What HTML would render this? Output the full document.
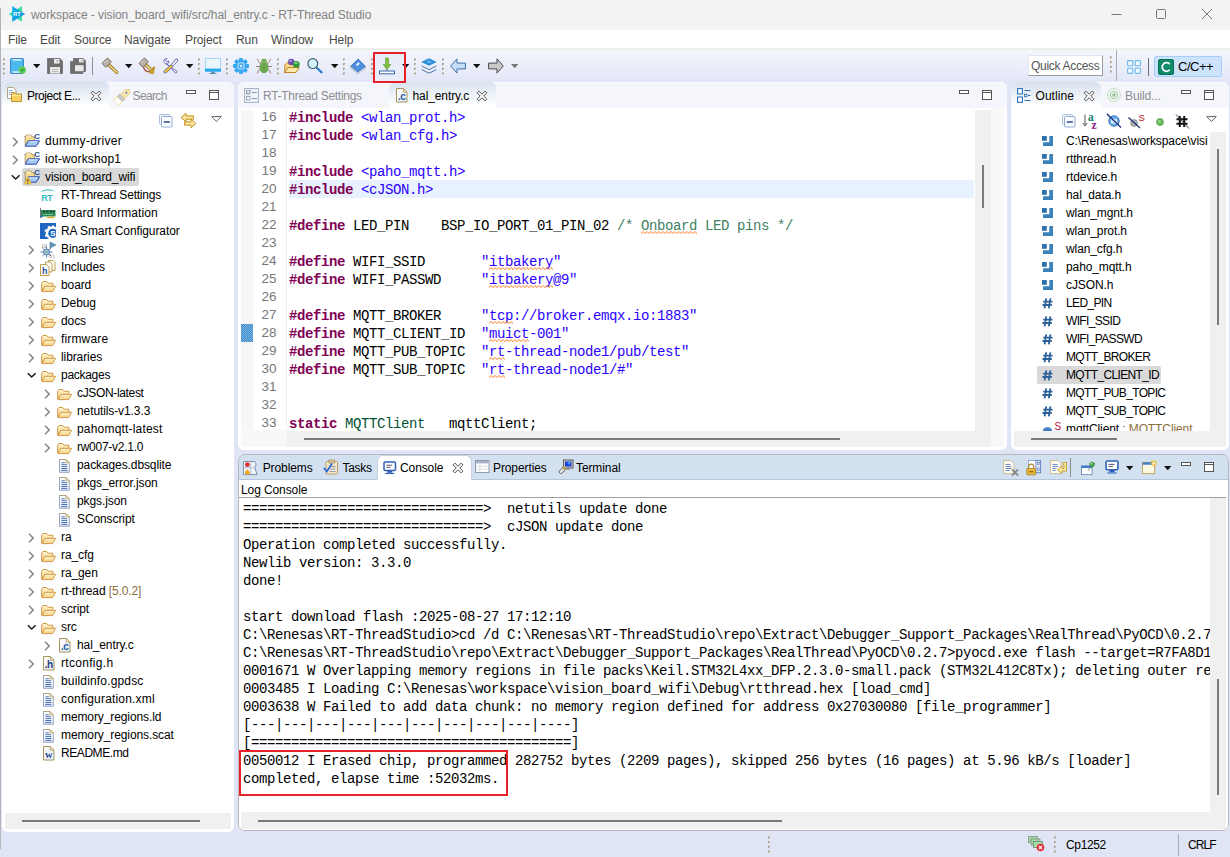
<!DOCTYPE html><html><head><meta charset="utf-8"><title>workspace - vision_board_wifi/src/hal_entry.c - RT-Thread Studio</title><style>
*{box-sizing:border-box;margin:0;padding:0}
html,body{width:1230px;height:857px;overflow:hidden}
body{background:#e0e5f5;font-family:"Liberation Sans",sans-serif;font-size:12px;color:#000;position:relative;letter-spacing:-0.1px}
.abs{position:absolute}
.t{position:absolute;white-space:nowrap;line-height:18px;height:18px}
.mono{font-family:"Liberation Mono",monospace;font-size:14px;letter-spacing:-0.4px;white-space:pre}
svg{position:absolute;overflow:visible}
.panel{position:absolute;background:#fff;border-radius:6px;overflow:hidden}
.hdr{position:absolute;left:0;top:0;right:0;height:26px;background:#f5f6fb;border-top:1px solid #fff}
.kw{color:#7f0055;font-weight:bold}
.str{color:#2a00ff}
.cm{color:#3f7f5f}
.ty{color:#005032}
.sq{position:relative;display:inline-block}
.sq svg{left:0;top:14px;width:100%;height:3px}
.ln{position:absolute;left:0;width:38.5px;text-align:right;color:#787878;font-size:13.5px;letter-spacing:0}
.cl{position:absolute;left:51px}
.g{color:#8c8c92}
</style></head><body>
<svg width="0" height="0" style="left:0;top:0"><defs><pattern id="zz" width="4" height="3" patternUnits="userSpaceOnUse"><path d="M-1 3.500 2 .5 5 3.500" fill="none" stroke="#ff7a22" stroke-width="1"/></pattern></defs></svg>
<div class="abs" style="left:0;top:0;width:1230px;height:30px;background:#f3f3f3"></div>
<svg style="left:8px;top:5px" width="18" height="18" viewBox="0 0 18 18"><defs><linearGradient id="rtb" x1="0" y1="0" x2="1" y2="1"><stop offset="0" stop-color="#16b4f0"/><stop offset="1" stop-color="#0a8ee0"/></linearGradient></defs><path d="M.8 8.900 14 1.100v15.600z" fill="#43e0a0"/><path d="M17.100 8.900 4.200 1.100v15.600z" fill="url(#rtb)"/><text x="9" y="11" font-size="5.600" font-weight="bold" fill="#fff" text-anchor="middle" font-family="Liberation Sans,sans-serif">RT</text></svg>
<div class="t" style="left:31px;top:6px;color:#828282;letter-spacing:-0.085px">workspace - vision_board_wifi/src/hal_entry.c - RT-Thread Studio</div>
<svg style="left:1100px;top:0" width="130" height="30"><path d="M11.500 14.500h10" stroke="#777" stroke-width="1"/><rect x="56.5" y="9.5" width="9" height="9" rx="1" fill="none" stroke="#777" stroke-width="1"/><path d="M102 9l10 10M112 9l-10 10" stroke="#777" stroke-width="1"/></svg>
<div class="abs" style="left:0;top:30px;width:1230px;height:18px;background:#fff"></div>
<div class="t" style="left:8px;top:31px;color:#484848">File</div>
<div class="t" style="left:40px;top:31px;color:#484848">Edit</div>
<div class="t" style="left:74px;top:31px;color:#484848">Source</div>
<div class="t" style="left:124px;top:31px;color:#484848">Navigate</div>
<div class="t" style="left:185px;top:31px;color:#484848">Project</div>
<div class="t" style="left:236px;top:31px;color:#484848">Run</div>
<div class="t" style="left:271px;top:31px;color:#484848">Window</div>
<div class="t" style="left:329px;top:31px;color:#484848">Help</div>
<div class="abs" style="left:0;top:48px;width:1230px;height:2px;background:#eeeeee"></div>
<div class="abs" style="left:0;top:50px;width:1230px;height:32px;background:linear-gradient(#f4f6fc,#eceffa 45%,#e2e6f6)"></div>
<svg style="left:3px;top:58px" width="3" height="17" viewBox="0 0 3 17"><rect x="0" y="0.5" width="2" height="2" fill="#a39880"/><rect x="1" y="1.5" width="1.2" height="1.2" fill="#fff" opacity=".6"/><rect x="0" y="5.2" width="2" height="2" fill="#a39880"/><rect x="1" y="6.2" width="1.2" height="1.2" fill="#fff" opacity=".6"/><rect x="0" y="9.9" width="2" height="2" fill="#a39880"/><rect x="1" y="10.9" width="1.2" height="1.2" fill="#fff" opacity=".6"/><rect x="0" y="14.6" width="2" height="2" fill="#a39880"/><rect x="1" y="15.6" width="1.2" height="1.2" fill="#fff" opacity=".6"/></svg>
<svg style="left:10px;top:58px" width="16" height="16" viewBox="0 0 16 16"><rect x=".5" y=".5" width="13" height="15" rx=".8" fill="#4cb9ee" stroke="#3a86c8"/><rect x="2.600" y="1" width="8.800" height="1.700" fill="#c9ebfb"/><rect x="2.600" y="13.200" width="7" height="1.800" fill="#c9ebfb"/><circle cx="12.300" cy="11.900" r="3.700" fill="#68d05c"/><path d="M12.300 9.500v4.800M9.900 11.900h4.800" stroke="#2f9e3a" stroke-width="1"/></svg>
<svg style="left:33px;top:64px" width="8" height="5" viewBox="0 0 8 5"><path d="M0 0h7.4L3.7 4.2z" fill="#111"/></svg>
<svg style="left:47px;top:58px" width="16" height="16" viewBox="0 0 16 16"><path d="M.5 .5h12.5l2.5 2.5v12.5H.5z" fill="#6f6f6f" stroke="#5a5a5a" stroke-width=".6"/><rect x="7" y="1" width="5.5" height="4.5" fill="#ececec"/><rect x="9.7" y="2.2" width="1.2" height="1.6" fill="#8a8a8a"/><rect x="3" y="9" width="10" height="6.5" fill="#e6e6e6"/><path d="M5 11.5h6M5 13.5h6" stroke="#bdbdbd" stroke-width="1"/></svg>
<svg style="left:70px;top:58px" width="16" height="16" viewBox="0 0 16 16"><path d="M.5 3.5h3v-3h9.8l2.2 2.2v10.8h-2.5v2H.5z" fill="#6f6f6f" stroke="#5a5a5a" stroke-width=".6"/><rect x="9" y="1" width="4.6" height="3.4" fill="#ececec"/><rect x="11.4" y="1.8" width="1" height="1.4" fill="#8a8a8a"/><rect x="5" y="7.2" width="8.6" height="6" fill="#e9e9e9"/></svg>
<div class="abs" style="left:92px;top:57px;width:1px;height:18px;background:#8d8d8d"></div>
<svg style="left:102px;top:58px" width="16" height="16" viewBox="0 0 16 16"><path d="M6.500 6.500 14.800 14.300" stroke="#8a6a20" stroke-width="3.200" stroke-linecap="round"/><path d="M6.500 6.500 14.800 14.300" stroke="#f4da80" stroke-width="1.700" stroke-linecap="round"/><path d="M.7 4.800 4.600 .6c.5-.5 1-.5 1.500 0l2.600 2.400c.5 .5 .5 1 0 1.500L4.800 8.700c-.5 .5-1 .5-1.500 0L.7 6.300c-.5-.5-.5-1 0-1.500z" fill="#b8b2ab" stroke="#6e5a48" stroke-width=".9"/><path d="M2 5 5 1.800" stroke="#dcd8d2" stroke-width="1"/></svg>
<svg style="left:125px;top:64px" width="8" height="5" viewBox="0 0 8 5"><path d="M0 0h7.4L3.7 4.2z" fill="#111"/></svg>
<svg style="left:139px;top:58px" width="16" height="16" viewBox="0 0 16 16"><path d="M4.500 8c0 4.500 3 6 7.500 6" stroke="#a8482a" stroke-width="1.200" fill="none"/><path d="M6.500 6.500 13 12.800" stroke="#8a6a20" stroke-width="3.200" stroke-linecap="round"/><path d="M6.500 6.500 13 12.800" stroke="#f4da80" stroke-width="1.700" stroke-linecap="round"/><path d="M.7 4.800 4.600 .6c.5-.5 1-.5 1.500 0l2.600 2.400c.5 .5 .5 1 0 1.500L4.800 8.700c-.5 .5-1 .5-1.500 0L.7 6.300c-.5-.5-.5-1 0-1.500z" fill="#b8b2ab" stroke="#6e5a48" stroke-width=".9"/><path d="M2 5 5 1.800" stroke="#dcd8d2" stroke-width="1"/><path d="M11.300 15.600h3.400v-3.800l1-.8v-2.200l-2 .8-.3 2.800h-2.100z" fill="#dca820" stroke="#a67a10" stroke-width=".6"/></svg>
<svg style="left:163px;top:58px" width="16" height="16" viewBox="0 0 16 16"><path d="M1 3.600C.4 1.800 1.800 .2 3.800 .6L2.600 2.400 3.800 3.800 5.800 3c.4 1.800-1 3.200-2.600 2.800L13.800 13.200c.8 .8 -.8 2.400-1.600 1.600L4.400 6.400C2.800 6.200 1.600 5.200 1 3.600z" fill="#f6f6fc" stroke="#5a5eaa" stroke-width=".9" stroke-linejoin="round"/><path d="M13 .8 14.800 1.600 14.400 3.600 9.800 8 8.400 6.600z" fill="#f6f6fc" stroke="#5a5eaa" stroke-width=".9" stroke-linejoin="round"/><path d="M8.200 6.800 9.800 8.400 4 14.200c-.8 .8-2.400 1-2.800 .6s-.2-2 .6-2.800z" fill="#f2c230" stroke="#5a5eaa" stroke-width=".8" stroke-linejoin="round"/></svg>
<svg style="left:186px;top:64px" width="8" height="5" viewBox="0 0 8 5"><path d="M0 0h7.4L3.7 4.2z" fill="#111"/></svg>
<svg style="left:198px;top:58px" width="3" height="17" viewBox="0 0 3 17"><rect x="0" y="0.5" width="2" height="2" fill="#a39880"/><rect x="1" y="1.5" width="1.2" height="1.2" fill="#fff" opacity=".6"/><rect x="0" y="5.2" width="2" height="2" fill="#a39880"/><rect x="1" y="6.2" width="1.2" height="1.2" fill="#fff" opacity=".6"/><rect x="0" y="9.9" width="2" height="2" fill="#a39880"/><rect x="1" y="10.9" width="1.2" height="1.2" fill="#fff" opacity=".6"/><rect x="0" y="14.6" width="2" height="2" fill="#a39880"/><rect x="1" y="15.6" width="1.2" height="1.2" fill="#fff" opacity=".6"/></svg>
<svg style="left:205px;top:58px" width="16" height="16" viewBox="0 0 16 16"><rect x=".5" y=".5" width="15" height="13" fill="#e8f5fd" stroke="#a9d6f5"/><rect x="0" y="10.6" width="16" height="3" fill="#29a8f2"/><path d="M3 8 7 2M9 8 13 2" stroke="#fff" stroke-width="1"/><path d="M6.5 13.6h3l.6 1.6h1.4v.8H4.500v-.8h1.400z" fill="#5f86ad"/></svg>
<svg style="left:226px;top:58px" width="3" height="17" viewBox="0 0 3 17"><rect x="0" y="0.5" width="2" height="2" fill="#a39880"/><rect x="1" y="1.5" width="1.2" height="1.2" fill="#fff" opacity=".6"/><rect x="0" y="5.2" width="2" height="2" fill="#a39880"/><rect x="1" y="6.2" width="1.2" height="1.2" fill="#fff" opacity=".6"/><rect x="0" y="9.9" width="2" height="2" fill="#a39880"/><rect x="1" y="10.9" width="1.2" height="1.2" fill="#fff" opacity=".6"/><rect x="0" y="14.6" width="2" height="2" fill="#a39880"/><rect x="1" y="15.6" width="1.2" height="1.2" fill="#fff" opacity=".6"/></svg>
<svg style="left:233px;top:58px" width="16" height="16" viewBox="0 0 16 16"><rect x="6" y="0" width="4" height="4" rx=".8" fill="#38a7f2" transform="rotate(0 8 8)"/><rect x="6" y="0" width="4" height="4" rx=".8" fill="#38a7f2" transform="rotate(45 8 8)"/><rect x="6" y="0" width="4" height="4" rx=".8" fill="#38a7f2" transform="rotate(90 8 8)"/><rect x="6" y="0" width="4" height="4" rx=".8" fill="#38a7f2" transform="rotate(135 8 8)"/><rect x="6" y="0" width="4" height="4" rx=".8" fill="#38a7f2" transform="rotate(180 8 8)"/><rect x="6" y="0" width="4" height="4" rx=".8" fill="#38a7f2" transform="rotate(225 8 8)"/><rect x="6" y="0" width="4" height="4" rx=".8" fill="#38a7f2" transform="rotate(270 8 8)"/><rect x="6" y="0" width="4" height="4" rx=".8" fill="#38a7f2" transform="rotate(315 8 8)"/><circle cx="8" cy="8" r="6" fill="#38a7f2"/><rect x="5" y="5" width="6" height="6" rx="1.2" fill="none" stroke="#bfe0fb" stroke-width="1.1"/><rect x="6.8" y="6.8" width="2.4" height="2.4" fill="#d9ecfc"/></svg>
<svg style="left:256px;top:58px" width="16" height="16" viewBox="0 0 16 16"><path d="M1.500 .8 3 4.500 5 5.500M14.500 .8 13 4.500 11 5.500M0 8.500h4M16 8.500h-4M1.500 15.500 2.500 12 5 11M14.500 15.500 13.500 12 11 11" stroke="#a08474" stroke-width="1" fill="none"/><ellipse cx="8" cy="9.300" rx="4.600" ry="6" fill="#70a852"/><ellipse cx="8" cy="3.200" rx="2.800" ry="2.600" fill="#7cb45a"/><path d="M8 4.500v10.500" stroke="#5a9040" stroke-width=".8"/></svg>
<svg style="left:277px;top:58px" width="3" height="17" viewBox="0 0 3 17"><rect x="0" y="0.5" width="2" height="2" fill="#a39880"/><rect x="1" y="1.5" width="1.2" height="1.2" fill="#fff" opacity=".6"/><rect x="0" y="5.2" width="2" height="2" fill="#a39880"/><rect x="1" y="6.2" width="1.2" height="1.2" fill="#fff" opacity=".6"/><rect x="0" y="9.9" width="2" height="2" fill="#a39880"/><rect x="1" y="10.9" width="1.2" height="1.2" fill="#fff" opacity=".6"/><rect x="0" y="14.6" width="2" height="2" fill="#a39880"/><rect x="1" y="15.6" width="1.2" height="1.2" fill="#fff" opacity=".6"/></svg>
<svg style="left:284px;top:58px" width="16" height="16" viewBox="0 0 16 16"><path d="M.8 14.500V7l2.400-2.400h5L9.500 6h5v3z" fill="#f7dc8a" stroke="#c0741a" stroke-width=".9" stroke-linejoin="round"/><path d="M.8 14.500 3.800 9.500h11.500l-3.300 5z" fill="#fbe9a8" stroke="#c0741a" stroke-width=".9" stroke-linejoin="round"/><circle cx="7.300" cy="4" r="3.200" fill="#6a4fa8"/><circle cx="6.600" cy="3" r="1.200" fill="#a796d6"/><circle cx="12.300" cy="6.300" r="3.400" fill="#2f9640"/><ellipse cx="12" cy="5" rx="2" ry="1" fill="#7ccf80"/></svg>
<svg style="left:307px;top:58px" width="17" height="16" viewBox="0 0 17 16"><path d="M9.500 9.500 15.200 15" stroke="#2f7fd0" stroke-width="2.400" stroke-linecap="butt"/><circle cx="5.800" cy="5.600" r="4.900" fill="#d5f3fb" stroke="#3d5f78" stroke-width="1.200"/></svg>
<svg style="left:331px;top:64px" width="8" height="5" viewBox="0 0 8 5"><path d="M0 0h7.4L3.7 4.2z" fill="#111"/></svg>
<svg style="left:343px;top:58px" width="3" height="17" viewBox="0 0 3 17"><rect x="0" y="0.5" width="2" height="2" fill="#a39880"/><rect x="1" y="1.5" width="1.2" height="1.2" fill="#fff" opacity=".6"/><rect x="0" y="5.2" width="2" height="2" fill="#a39880"/><rect x="1" y="6.2" width="1.2" height="1.2" fill="#fff" opacity=".6"/><rect x="0" y="9.9" width="2" height="2" fill="#a39880"/><rect x="1" y="10.9" width="1.2" height="1.2" fill="#fff" opacity=".6"/><rect x="0" y="14.6" width="2" height="2" fill="#a39880"/><rect x="1" y="15.6" width="1.2" height="1.2" fill="#fff" opacity=".6"/></svg>
<svg style="left:350px;top:58px" width="16" height="16" viewBox="0 0 16 16"><path d="M.6 8.300 8.200 1 15.400 8.400 7.800 14.200z" fill="#4f8fe0" stroke="#3568b0" stroke-width=".8" stroke-linejoin="round"/><path d="M.8 8.800 7.800 14.600 15.300 9v1.800L7.800 15.800.8 10.600z" fill="#eef2f8" stroke="#7f92b0" stroke-width=".5"/><rect x="6" y="5.200" width="3.600" height="1.900" rx=".6" fill="#fff" transform="rotate(-42 7.800 6.100)"/></svg>
<svg style="left:371px;top:58px" width="3" height="17" viewBox="0 0 3 17"><rect x="0" y="0.5" width="2" height="2" fill="#a39880"/><rect x="1" y="1.5" width="1.2" height="1.2" fill="#fff" opacity=".6"/><rect x="0" y="5.2" width="2" height="2" fill="#a39880"/><rect x="1" y="6.2" width="1.2" height="1.2" fill="#fff" opacity=".6"/><rect x="0" y="9.9" width="2" height="2" fill="#a39880"/><rect x="1" y="10.9" width="1.2" height="1.2" fill="#fff" opacity=".6"/><rect x="0" y="14.6" width="2" height="2" fill="#a39880"/><rect x="1" y="15.6" width="1.2" height="1.2" fill="#fff" opacity=".6"/></svg>
<div class="abs" style="left:374px;top:54px;width:30px;height:27px;background:#e9edf9"></div>
<svg style="left:379px;top:58px" width="16" height="16" viewBox="0 0 16 16"><path d="M6.500 0h3v6.500h2.400L8 11.400 4.100 6.500h2.400z" fill="#7fc13c" stroke="#5a9a28" stroke-width=".6"/><rect x=".5" y="13" width="15" height="2.800" fill="#fff" stroke="#3568a8" stroke-width="1"/><path d="M8 11v2" stroke="#3568a8" stroke-width="1"/></svg>
<svg style="left:402px;top:64px" width="8" height="5" viewBox="0 0 8 5"><path d="M0 0h7.4L3.7 4.2z" fill="#111"/></svg>
<svg style="left:414px;top:58px" width="3" height="17" viewBox="0 0 3 17"><rect x="0" y="0.5" width="2" height="2" fill="#a39880"/><rect x="1" y="1.5" width="1.2" height="1.2" fill="#fff" opacity=".6"/><rect x="0" y="5.2" width="2" height="2" fill="#a39880"/><rect x="1" y="6.2" width="1.2" height="1.2" fill="#fff" opacity=".6"/><rect x="0" y="9.9" width="2" height="2" fill="#a39880"/><rect x="1" y="10.9" width="1.2" height="1.2" fill="#fff" opacity=".6"/><rect x="0" y="14.6" width="2" height="2" fill="#a39880"/><rect x="1" y="15.6" width="1.2" height="1.2" fill="#fff" opacity=".6"/></svg>
<svg style="left:421px;top:58px" width="16" height="16" viewBox="0 0 16 16"><path d="M8 .3 15.800 4 8 7.800 .2 4z" fill="#2a8fdc"/><text x="8" y="4.900" font-size="2.600" fill="#cfe8fa" text-anchor="middle" font-family="Liberation Sans,sans-serif">kits</text><path d="M.6 8 8 11.600 15.400 8M.6 11.600 8 15.200 15.400 11.600" stroke="#3b6aa5" stroke-width=".9" fill="none"/></svg>
<svg style="left:442px;top:58px" width="3" height="17" viewBox="0 0 3 17"><rect x="0" y="0.5" width="2" height="2" fill="#a39880"/><rect x="1" y="1.5" width="1.2" height="1.2" fill="#fff" opacity=".6"/><rect x="0" y="5.2" width="2" height="2" fill="#a39880"/><rect x="1" y="6.2" width="1.2" height="1.2" fill="#fff" opacity=".6"/><rect x="0" y="9.9" width="2" height="2" fill="#a39880"/><rect x="1" y="10.9" width="1.2" height="1.2" fill="#fff" opacity=".6"/><rect x="0" y="14.6" width="2" height="2" fill="#a39880"/><rect x="1" y="15.6" width="1.2" height="1.2" fill="#fff" opacity=".6"/></svg>
<svg style="left:450px;top:58px" width="16" height="16" viewBox="0 0 16 16"><path d="M.7 8 7 .9v4.200h8.400v5.800H7v4.200z" fill="#c6dff6" stroke="#3f6ea8" stroke-width="1" stroke-linejoin="miter"/></svg>
<svg style="left:473px;top:64px" width="8" height="5" viewBox="0 0 8 5"><path d="M0 0h7.4L3.7 4.2z" fill="#111"/></svg>
<svg style="left:488px;top:58px" width="16" height="16" viewBox="0 0 16 16"><path d="M15.300 8 9 .9v4.200H.6v5.800H9v4.200z" fill="#c9c9c9" stroke="#4a4a4a" stroke-width="1" stroke-linejoin="miter"/></svg>
<svg style="left:511px;top:64px" width="8" height="5" viewBox="0 0 8 5"><path d="M0 0h7.4L3.7 4.2z" fill="#777"/></svg>
<div class="abs" style="left:1028px;top:55px;width:75px;height:21px;background:#fff;border:1px solid #e6e6ee;border-right-color:#9a9a9a;border-bottom-color:#9a9a9a"></div>
<div class="t" style="left:1031px;top:57px;color:#555;letter-spacing:-0.3px">Quick Access</div>
<svg style="left:1110px;top:56px" width="3" height="17" viewBox="0 0 3 17"><rect x="0" y="0.5" width="2" height="2" fill="#a39880"/><rect x="1" y="1.5" width="1.2" height="1.2" fill="#fff" opacity=".6"/><rect x="0" y="5.2" width="2" height="2" fill="#a39880"/><rect x="1" y="6.2" width="1.2" height="1.2" fill="#fff" opacity=".6"/><rect x="0" y="9.9" width="2" height="2" fill="#a39880"/><rect x="1" y="10.9" width="1.2" height="1.2" fill="#fff" opacity=".6"/><rect x="0" y="14.6" width="2" height="2" fill="#a39880"/><rect x="1" y="15.6" width="1.2" height="1.2" fill="#fff" opacity=".6"/></svg>
<div class="abs" style="left:1116px;top:50px;width:1px;height:31px;background:#a8abb8"></div>
<svg style="left:1127px;top:60px" width="14" height="14" viewBox="0 0 14 14"><rect x=".6" y=".6" width="5.200" height="5.200" rx=".8" fill="#f2faff" stroke="#6cb8ea" stroke-width="1.100"/><rect x="8.200" y=".6" width="5.200" height="5.200" rx=".8" fill="#f2faff" stroke="#6cb8ea" stroke-width="1.100"/><rect x=".6" y="8.200" width="5.200" height="5.200" rx=".8" fill="#f2faff" stroke="#6cb8ea" stroke-width="1.100"/><rect x="8.200" y="8.200" width="5.200" height="5.200" rx=".8" fill="#f2faff" stroke="#6cb8ea" stroke-width="1.100"/></svg>
<div class="abs" style="left:1148px;top:58px;width:1px;height:18px;background:#6f6f6f"></div>
<div class="abs" style="left:1154px;top:56px;width:68px;height:21px;background:#cde3fb;border:1px solid #a5cdf7;border-radius:2px"></div>
<svg style="left:1158px;top:59px" width="16" height="16" viewBox="0 0 16 16"><rect x=".5" y=".5" width="15" height="15" rx="1.500" fill="#0f8a6a" stroke="#0b6e56"/><path d="M11.800 5.200A4.300 4.300 0 1 0 11.800 10.800" stroke="#fff" stroke-width="1.700" fill="none"/></svg>
<div class="t" style="left:1178px;top:58px;font-size:13px;letter-spacing:-0.5px">C/C++</div>
<div class="panel" style="left:2px;top:82px;width:232px;height:750px"><div class="abs" style="left:1px;top:0;width:231px;height:750px">
<div class="hdr" style="left:-1px"></div>
<div class="abs" style="left:-1px;top:0;width:107px;height:26px;background:linear-gradient(#d6e1ed,#fff 92%);border-radius:6px 5px 0 0"></div>
<svg style="left:4px;top:5px" width="16" height="16" viewBox="0 0 16 16"><path d="M.5 .5h6l2.500 2.500v8.500h-8.500z" fill="#fff" stroke="#a89a78" stroke-width=".9"/><path d="M2 3.500h3.500M2 5.500h5M2 7.500h5" stroke="#7f9fd0" stroke-width=".8"/><path d="M4.500 14.500v-7.500l1-1.200h3l1 1.200h5v7.500z" fill="#f6d264" stroke="#b98a20" stroke-width=".9" stroke-linejoin="round"/><path d="M5 8.500h9" stroke="#fbe9a0" stroke-width="1"/></svg>
<div class="t" style="left:24px;top:5px;letter-spacing:-0.45px">Project E...</div>
<svg style="left:87.2px;top:8.2px" width="12" height="12" viewBox="0 0 11 11"><path d="M1 2.600 2.600 1 5.500 3.900 8.400 1 10 2.600 7.100 5.500 10 8.400 8.400 10 5.500 7.100 2.600 10 1 8.400 3.900 5.500z" fill="#fff" stroke="#4a4a4a" stroke-width=".9" stroke-linejoin="round"/></svg>
<svg style="left:111.5px;top:5px" width="17" height="17" viewBox="0 0 17 17"><g transform="rotate(-43 8.500 8.500)"><path d="M-1.500 4.200 3.500 5v7l-5 .8z" fill="#fdf6d8" stroke="#f0dc9a" stroke-width=".6"/><path d="M-1.500 6.500 3.500 6.800v3.400l-5 .3z" fill="#fff"/><rect x="3.500" y="4.800" width="3.800" height="7.400" rx=".8" fill="#c9c8cc" stroke="#b3a98c" stroke-width=".6"/><path d="M7.300 5.600h7.200l2.600 2.900-2.600 2.900H7.300z" fill="#f8e6ae" stroke="#e2c67c" stroke-width=".7"/><rect x="11.500" y="7.600" width="1.800" height="1.600" fill="#4a78c0"/></g></svg>
<div class="t g" style="left:129.500px;top:5px;letter-spacing:-0.62px">Search</div>
<svg style="left:183px;top:8px" width="11" height="5" viewBox="0 0 11 5"><rect x=".5" y=".5" width="9" height="3" fill="#fff" stroke="#555" stroke-width="1"/></svg>
<svg style="left:206px;top:8px" width="11" height="11" viewBox="0 0 11 11"><rect x=".5" y=".5" width="9" height="9" fill="#fff" stroke="#555" stroke-width="1"/><path d="M.5 2.500h9" stroke="#555" stroke-width="1"/></svg>
<svg style="left:156px;top:32px" width="14" height="14" viewBox="0 0 14 14"><rect x=".5" y=".5" width="10" height="10" rx="1" fill="#f4f8fd" stroke="#a9c0de"/><rect x="2.500" y="2.500" width="10.500" height="10.500" rx="1" fill="#fbfdff" stroke="#8fabd2"/><path d="M4.800 8h6" stroke="#24478f" stroke-width="1.500"/></svg>
<svg style="left:177px;top:30px" width="17" height="17" viewBox="0 0 17 17"><path d="M1 5.500 6 1.200v2.600h7.500v3.400H6v2.600z" fill="#fbe29a" stroke="#c48a10" stroke-width=".9" stroke-linejoin="round"/><path d="M16 11.500 11 7.200v2.600H4.500v3.400H11v2.600z" fill="#fbe29a" stroke="#c48a10" stroke-width=".9" stroke-linejoin="round"/></svg>
<svg style="left:208px;top:34px" width="11" height="7" viewBox="0 0 11 7"><path d="M.7 .6h9.600L5.500 5.400z" fill="#fff" stroke="#555" stroke-width=".9" stroke-linejoin="round"/></svg>
<svg style="left:8.8px;top:54.8px" width="7" height="10" viewBox="0 0 7 10"><path d="M1 .8 5.200 5 1 9.200" stroke="#858585" stroke-width="1.500" fill="none"/></svg>
<svg style="left:21px;top:51.5px" width="16" height="15" viewBox="0 0 16 15"><path d="M.5 2.500h1.200" stroke="#6a5a7a" stroke-width=".9"/><path d="M1.200 11.500V2.800l1.300-1.800h4.300l1.200 1.800h2.500v3.500" fill="#f9dd8e" stroke="#9a865a" stroke-width=".8" stroke-linejoin="round"/><path d="M3 1.500h3.500v1.300H2.300z" fill="#fdf3d0"/><path d="M1.200 12.200 4.200 6.800h11.300l-3.200 5.400z" fill="#a6c9f2" stroke="#2a46b0" stroke-width="1" stroke-linejoin="round"/><path d="M4.800 7.800h8.800" stroke="#dcebfb" stroke-width=".9"/><text x="12.900" y="5.300" font-size="7.800" font-weight="bold" fill="#1d4a8c" text-anchor="middle" font-family="Liberation Sans,sans-serif">C</text></svg>
<div class="t" style="left:42px;top:50px;letter-spacing:0.32px">dummy-driver</div>
<svg style="left:8.8px;top:72.8px" width="7" height="10" viewBox="0 0 7 10"><path d="M1 .8 5.200 5 1 9.200" stroke="#858585" stroke-width="1.500" fill="none"/></svg>
<svg style="left:21px;top:69.5px" width="16" height="15" viewBox="0 0 16 15"><path d="M.5 2.500h1.200" stroke="#6a5a7a" stroke-width=".9"/><path d="M1.200 11.500V2.800l1.300-1.800h4.300l1.200 1.800h2.500v3.500" fill="#f9dd8e" stroke="#9a865a" stroke-width=".8" stroke-linejoin="round"/><path d="M3 1.500h3.500v1.300H2.300z" fill="#fdf3d0"/><path d="M1.200 12.200 4.200 6.800h11.300l-3.200 5.400z" fill="#a6c9f2" stroke="#2a46b0" stroke-width="1" stroke-linejoin="round"/><path d="M4.800 7.800h8.800" stroke="#dcebfb" stroke-width=".9"/><text x="12.900" y="5.300" font-size="7.800" font-weight="bold" fill="#1d4a8c" text-anchor="middle" font-family="Liberation Sans,sans-serif">C</text></svg>
<div class="t" style="left:42px;top:68px;letter-spacing:0.1px">iot-workshop1</div>
<div class="abs" style="left:19px;top:86px;width:117px;height:18px;background:#d9d9d9;border-radius:2px"></div>
<svg style="left:8px;top:92.3px" width="10" height="7" viewBox="0 0 10 7"><path d="M.8 1.200 4.700 5 8.600 1.200" stroke="#1a1a1a" stroke-width="1.500" fill="none"/></svg>
<svg style="left:21px;top:87.5px" width="16" height="15" viewBox="0 0 16 15"><path d="M.5 2.500h1.200" stroke="#6a5a7a" stroke-width=".9"/><path d="M1.200 11.500V2.800l1.300-1.800h4.300l1.200 1.800h2.500v3.500" fill="#f9dd8e" stroke="#9a865a" stroke-width=".8" stroke-linejoin="round"/><path d="M3 1.500h3.500v1.300H2.300z" fill="#fdf3d0"/><path d="M1.200 12.200 4.200 6.800h11.300l-3.200 5.400z" fill="#a6c9f2" stroke="#2a46b0" stroke-width="1" stroke-linejoin="round"/><path d="M4.800 7.800h8.800" stroke="#dcebfb" stroke-width=".9"/><text x="12.900" y="5.300" font-size="7.800" font-weight="bold" fill="#1d4a8c" text-anchor="middle" font-family="Liberation Sans,sans-serif">C</text><path d="M3.300 7.600c.3-.5 .9-.5 1.200 0l2.600 5.200c.3 .6 0 1.200-.7 1.200h-5c-.7 0-1-.6-.7-1.200z" fill="#f8cf5a" stroke="#c99a2a" stroke-width=".6"/><path d="M3.900 9.300v2.500M3.900 12.500v.9" stroke="#2a1a00" stroke-width="1"/></svg>
<div class="t" style="left:42px;top:86px">vision_board_wifi</div>
<svg style="left:37px;top:106px" width="16" height="14" viewBox="0 0 16 14"><path d="M.5 4C4 .6 11 .4 15.500 3.600 10.500 1.800 4.500 2.200 .5 4z" fill="#3fc3c3"/><text x="6.700" y="12.600" font-size="9" font-weight="bold" fill="#2fb9bf" text-anchor="middle" font-family="Liberation Sans,sans-serif" letter-spacing="-.5">RT</text></svg>
<div class="t" style="left:58px;top:104px;letter-spacing:-0.21px">RT-Thread Settings</div>
<svg style="left:37px;top:125px" width="16" height="14" viewBox="0 0 16 14"><path d="M.5 1v10" stroke="#777" stroke-width="1"/><rect x="1" y="3" width="14.500" height="6.500" fill="#2f8a57"/><path d="M3 4.500h2M6.500 4.500h2M10 4.500h2M13 4.500h1.500" stroke="#1a3a28" stroke-width="1.600"/><path d="M3 7.500h10" stroke="#6fc08a" stroke-width="1"/><rect x="7" y="9.500" width="7.500" height="1.800" fill="#d9b84a"/><rect x=".5" y="8.500" width="2" height="2" fill="#2a6fd0"/></svg>
<div class="t" style="left:58px;top:122px;letter-spacing:0.08px">Board Information</div>
<svg style="left:37px;top:141px" width="16" height="16" viewBox="0 0 16 16"><clipPath id="rac"><rect width="16" height="16"/></clipPath><g clip-path="url(#rac)"><rect width="16" height="16" fill="#1f66c0"/><circle cx="12.500" cy="10" r="6.800" fill="#fff"/><path d="M5 7l1.500 1M5.200 13l1.500-.8M8.500 3.200l.8 1.600M13 2.400v1.600" stroke="#fff" stroke-width="2.200"/><circle cx="12.800" cy="10.300" r="4.600" fill="#1f66c0"/><text x="12.900" y="13.200" font-size="8" font-weight="bold" fill="#fff" text-anchor="middle" font-family="Liberation Sans,sans-serif">S</text></g></svg>
<div class="t" style="left:58px;top:140px">RA Smart Configurator</div>
<svg style="left:24.8px;top:162.8px" width="7" height="10" viewBox="0 0 7 10"><path d="M1 .8 5.200 5 1 9.200" stroke="#858585" stroke-width="1.500" fill="none"/></svg>
<svg style="left:37px;top:160px" width="16" height="16" viewBox="0 0 16 16"><text x="1" y="5.500" font-size="6" fill="#8a8a8a" font-family="Liberation Serif,serif">10</text><text x="9" y="15.500" font-size="6" fill="#9a9a9a" font-family="Liberation Serif,serif">01</text><path d="M10 0 16 3 10 6z" fill="#5f98b8" stroke="#3f7898" stroke-width=".6"/><path d="M2 5.500 11 14M.5 10h12M6.500 4.500V15.500M11 6 2.500 14" stroke="#4a6fa8" stroke-width=".9"/><circle cx="6.500" cy="10" r="3" fill="#a8c0d8" stroke="#4a6fa8" stroke-width=".8"/><circle cx="6.500" cy="10" r="1.300" fill="#7fb89a"/></svg>
<div class="t" style="left:58px;top:158px">Binaries</div>
<svg style="left:24.8px;top:180.8px" width="7" height="10" viewBox="0 0 7 10"><path d="M1 .8 5.200 5 1 9.200" stroke="#858585" stroke-width="1.500" fill="none"/></svg>
<svg style="left:37px;top:178px" width="16" height="16" viewBox="0 0 16 16"><path d="M8.5 0.5h4.500l2 2v8h-6.500z" fill="#fff" stroke="#b8963a" stroke-width=".9"/><path d="M5.5 2h4.500l2 2v8h-6.500z" fill="#fff" stroke="#b8963a" stroke-width=".9"/><path d="M.5 4.500h6l2.500 2.500v8.500h-8.500z" fill="#fff" stroke="#b8963a" stroke-width=".9"/><text x="4.600" y="13.800" font-size="9" font-weight="bold" fill="#2a4a9a" text-anchor="middle" font-family="Liberation Sans,sans-serif">h</text></svg>
<div class="t" style="left:58px;top:176px">Includes</div>
<svg style="left:24.8px;top:198.8px" width="7" height="10" viewBox="0 0 7 10"><path d="M1 .8 5.200 5 1 9.200" stroke="#858585" stroke-width="1.500" fill="none"/></svg>
<svg style="left:38px;top:199px" width="16" height="12" viewBox="0 0 16 12"><defs><linearGradient id="fg" x1="0" y1="0" x2="0" y2="1"><stop offset="0" stop-color="#fef4cf"/><stop offset="1" stop-color="#f6cf7e"/></linearGradient></defs><path d="M.6 10V2.200l1.300-1.700h3.800l1.400 1.700h4.800v2.800" fill="url(#fg)" stroke="#c98f3c" stroke-width=".9" stroke-linejoin="round"/><path d="M.9 10.600 3.800 5.300h10.900l-3.100 5.300z" fill="url(#fg)" stroke="#c98f3c" stroke-width=".9" stroke-linejoin="round"/></svg>
<div class="t" style="left:58px;top:194px">board</div>
<svg style="left:24.8px;top:216.8px" width="7" height="10" viewBox="0 0 7 10"><path d="M1 .8 5.200 5 1 9.200" stroke="#858585" stroke-width="1.500" fill="none"/></svg>
<svg style="left:38px;top:217px" width="16" height="12" viewBox="0 0 16 12"><defs><linearGradient id="fg" x1="0" y1="0" x2="0" y2="1"><stop offset="0" stop-color="#fef4cf"/><stop offset="1" stop-color="#f6cf7e"/></linearGradient></defs><path d="M.6 10V2.200l1.300-1.700h3.800l1.400 1.700h4.800v2.800" fill="url(#fg)" stroke="#c98f3c" stroke-width=".9" stroke-linejoin="round"/><path d="M.9 10.600 3.800 5.300h10.900l-3.100 5.300z" fill="url(#fg)" stroke="#c98f3c" stroke-width=".9" stroke-linejoin="round"/></svg>
<div class="t" style="left:58px;top:212px">Debug</div>
<svg style="left:24.8px;top:234.8px" width="7" height="10" viewBox="0 0 7 10"><path d="M1 .8 5.200 5 1 9.200" stroke="#858585" stroke-width="1.500" fill="none"/></svg>
<svg style="left:38px;top:235px" width="16" height="12" viewBox="0 0 16 12"><defs><linearGradient id="fg" x1="0" y1="0" x2="0" y2="1"><stop offset="0" stop-color="#fef4cf"/><stop offset="1" stop-color="#f6cf7e"/></linearGradient></defs><path d="M.6 10V2.200l1.300-1.700h3.800l1.400 1.700h4.800v2.800" fill="url(#fg)" stroke="#c98f3c" stroke-width=".9" stroke-linejoin="round"/><path d="M.9 10.600 3.800 5.300h10.900l-3.100 5.300z" fill="url(#fg)" stroke="#c98f3c" stroke-width=".9" stroke-linejoin="round"/></svg>
<div class="t" style="left:58px;top:230px">docs</div>
<svg style="left:24.8px;top:252.8px" width="7" height="10" viewBox="0 0 7 10"><path d="M1 .8 5.200 5 1 9.200" stroke="#858585" stroke-width="1.500" fill="none"/></svg>
<svg style="left:38px;top:253px" width="16" height="12" viewBox="0 0 16 12"><defs><linearGradient id="fg" x1="0" y1="0" x2="0" y2="1"><stop offset="0" stop-color="#fef4cf"/><stop offset="1" stop-color="#f6cf7e"/></linearGradient></defs><path d="M.6 10V2.200l1.300-1.700h3.800l1.400 1.700h4.800v2.800" fill="url(#fg)" stroke="#c98f3c" stroke-width=".9" stroke-linejoin="round"/><path d="M.9 10.600 3.800 5.300h10.900l-3.100 5.300z" fill="url(#fg)" stroke="#c98f3c" stroke-width=".9" stroke-linejoin="round"/></svg>
<div class="t" style="left:58px;top:248px;letter-spacing:0.15px">firmware</div>
<svg style="left:24.8px;top:270.8px" width="7" height="10" viewBox="0 0 7 10"><path d="M1 .8 5.200 5 1 9.200" stroke="#858585" stroke-width="1.500" fill="none"/></svg>
<svg style="left:38px;top:271px" width="16" height="12" viewBox="0 0 16 12"><defs><linearGradient id="fg" x1="0" y1="0" x2="0" y2="1"><stop offset="0" stop-color="#fef4cf"/><stop offset="1" stop-color="#f6cf7e"/></linearGradient></defs><path d="M.6 10V2.200l1.300-1.700h3.800l1.400 1.700h4.800v2.800" fill="url(#fg)" stroke="#c98f3c" stroke-width=".9" stroke-linejoin="round"/><path d="M.9 10.600 3.800 5.300h10.900l-3.100 5.300z" fill="url(#fg)" stroke="#c98f3c" stroke-width=".9" stroke-linejoin="round"/></svg>
<div class="t" style="left:58px;top:266px">libraries</div>
<svg style="left:24px;top:290.3px" width="10" height="7" viewBox="0 0 10 7"><path d="M.8 1.200 4.700 5 8.600 1.200" stroke="#1a1a1a" stroke-width="1.500" fill="none"/></svg>
<svg style="left:38px;top:289px" width="16" height="12" viewBox="0 0 16 12"><defs><linearGradient id="fg" x1="0" y1="0" x2="0" y2="1"><stop offset="0" stop-color="#fef4cf"/><stop offset="1" stop-color="#f6cf7e"/></linearGradient></defs><path d="M.6 10V2.200l1.300-1.700h3.800l1.400 1.700h4.800v2.800" fill="url(#fg)" stroke="#c98f3c" stroke-width=".9" stroke-linejoin="round"/><path d="M.9 10.600 3.800 5.300h10.900l-3.100 5.300z" fill="url(#fg)" stroke="#c98f3c" stroke-width=".9" stroke-linejoin="round"/></svg>
<div class="t" style="left:58px;top:284px;letter-spacing:-0.28px">packages</div>
<svg style="left:40.8px;top:306.8px" width="7" height="10" viewBox="0 0 7 10"><path d="M1 .8 5.200 5 1 9.200" stroke="#858585" stroke-width="1.500" fill="none"/></svg>
<svg style="left:54px;top:307px" width="16" height="12" viewBox="0 0 16 12"><defs><linearGradient id="fg" x1="0" y1="0" x2="0" y2="1"><stop offset="0" stop-color="#fef4cf"/><stop offset="1" stop-color="#f6cf7e"/></linearGradient></defs><path d="M.6 10V2.200l1.300-1.700h3.800l1.400 1.700h4.800v2.800" fill="url(#fg)" stroke="#c98f3c" stroke-width=".9" stroke-linejoin="round"/><path d="M.9 10.600 3.800 5.300h10.900l-3.100 5.300z" fill="url(#fg)" stroke="#c98f3c" stroke-width=".9" stroke-linejoin="round"/></svg>
<div class="t" style="left:74px;top:302px;letter-spacing:-0.34px">cJSON-latest</div>
<svg style="left:40.8px;top:324.8px" width="7" height="10" viewBox="0 0 7 10"><path d="M1 .8 5.200 5 1 9.200" stroke="#858585" stroke-width="1.500" fill="none"/></svg>
<svg style="left:54px;top:325px" width="16" height="12" viewBox="0 0 16 12"><defs><linearGradient id="fg" x1="0" y1="0" x2="0" y2="1"><stop offset="0" stop-color="#fef4cf"/><stop offset="1" stop-color="#f6cf7e"/></linearGradient></defs><path d="M.6 10V2.200l1.300-1.700h3.800l1.400 1.700h4.800v2.800" fill="url(#fg)" stroke="#c98f3c" stroke-width=".9" stroke-linejoin="round"/><path d="M.9 10.600 3.800 5.300h10.900l-3.100 5.300z" fill="url(#fg)" stroke="#c98f3c" stroke-width=".9" stroke-linejoin="round"/></svg>
<div class="t" style="left:74px;top:320px">netutils-v1.3.3</div>
<svg style="left:40.8px;top:342.8px" width="7" height="10" viewBox="0 0 7 10"><path d="M1 .8 5.200 5 1 9.200" stroke="#858585" stroke-width="1.500" fill="none"/></svg>
<svg style="left:54px;top:343px" width="16" height="12" viewBox="0 0 16 12"><defs><linearGradient id="fg" x1="0" y1="0" x2="0" y2="1"><stop offset="0" stop-color="#fef4cf"/><stop offset="1" stop-color="#f6cf7e"/></linearGradient></defs><path d="M.6 10V2.200l1.300-1.700h3.800l1.400 1.700h4.800v2.800" fill="url(#fg)" stroke="#c98f3c" stroke-width=".9" stroke-linejoin="round"/><path d="M.9 10.600 3.800 5.300h10.900l-3.100 5.300z" fill="url(#fg)" stroke="#c98f3c" stroke-width=".9" stroke-linejoin="round"/></svg>
<div class="t" style="left:74px;top:338px;letter-spacing:0.19px">pahomqtt-latest</div>
<svg style="left:40.8px;top:360.8px" width="7" height="10" viewBox="0 0 7 10"><path d="M1 .8 5.200 5 1 9.200" stroke="#858585" stroke-width="1.500" fill="none"/></svg>
<svg style="left:54px;top:361px" width="16" height="12" viewBox="0 0 16 12"><defs><linearGradient id="fg" x1="0" y1="0" x2="0" y2="1"><stop offset="0" stop-color="#fef4cf"/><stop offset="1" stop-color="#f6cf7e"/></linearGradient></defs><path d="M.6 10V2.200l1.300-1.700h3.800l1.400 1.700h4.800v2.800" fill="url(#fg)" stroke="#c98f3c" stroke-width=".9" stroke-linejoin="round"/><path d="M.9 10.600 3.800 5.300h10.900l-3.100 5.300z" fill="url(#fg)" stroke="#c98f3c" stroke-width=".9" stroke-linejoin="round"/></svg>
<div class="t" style="left:74px;top:356px;letter-spacing:-0.27px">rw007-v2.1.0</div>
<svg style="left:56px;top:376.5px" width="11" height="14" viewBox="0 0 11 14"><defs><linearGradient id="flg" x1="0" y1="0" x2="0" y2="1"><stop offset=".5" stop-color="#fff"/><stop offset="1" stop-color="#dfe8f6"/></linearGradient></defs><path d="M.5 .5h6.300l3.500 3.500v9.300H.5z" fill="url(#flg)" stroke="#8e9cba" stroke-width=".9"/><path d="M.5 .5h6.300l3.500 3.500" fill="none" stroke="#b3a374" stroke-width=".9"/><path d="M6.800 .5v3.500h3.500z" fill="#f1e6c4" stroke="#b3a374" stroke-width=".7"/><path d="M2.300 3.800h3.500M2.300 5.700h6M2.300 7.600h6M2.300 9.500h6M2.300 11.400h6" stroke="#4069b0" stroke-width=".95"/></svg>
<div class="t" style="left:74px;top:374px">packages.dbsqlite</div>
<svg style="left:56px;top:394.5px" width="11" height="14" viewBox="0 0 11 14"><defs><linearGradient id="flg" x1="0" y1="0" x2="0" y2="1"><stop offset=".5" stop-color="#fff"/><stop offset="1" stop-color="#dfe8f6"/></linearGradient></defs><path d="M.5 .5h6.300l3.500 3.500v9.300H.5z" fill="url(#flg)" stroke="#8e9cba" stroke-width=".9"/><path d="M.5 .5h6.300l3.500 3.500" fill="none" stroke="#b3a374" stroke-width=".9"/><path d="M6.800 .5v3.500h3.500z" fill="#f1e6c4" stroke="#b3a374" stroke-width=".7"/><path d="M2.300 3.800h3.500M2.300 5.700h6M2.300 7.600h6M2.300 9.500h6M2.300 11.400h6" stroke="#4069b0" stroke-width=".95"/></svg>
<div class="t" style="left:74px;top:392px">pkgs_error.json</div>
<svg style="left:56px;top:412.5px" width="11" height="14" viewBox="0 0 11 14"><defs><linearGradient id="flg" x1="0" y1="0" x2="0" y2="1"><stop offset=".5" stop-color="#fff"/><stop offset="1" stop-color="#dfe8f6"/></linearGradient></defs><path d="M.5 .5h6.300l3.500 3.500v9.300H.5z" fill="url(#flg)" stroke="#8e9cba" stroke-width=".9"/><path d="M.5 .5h6.300l3.500 3.500" fill="none" stroke="#b3a374" stroke-width=".9"/><path d="M6.800 .5v3.500h3.500z" fill="#f1e6c4" stroke="#b3a374" stroke-width=".7"/><path d="M2.300 3.800h3.500M2.300 5.700h6M2.300 7.600h6M2.300 9.500h6M2.300 11.400h6" stroke="#4069b0" stroke-width=".95"/></svg>
<div class="t" style="left:74px;top:410px">pkgs.json</div>
<svg style="left:56px;top:430.5px" width="11" height="14" viewBox="0 0 11 14"><defs><linearGradient id="flg" x1="0" y1="0" x2="0" y2="1"><stop offset=".5" stop-color="#fff"/><stop offset="1" stop-color="#dfe8f6"/></linearGradient></defs><path d="M.5 .5h6.300l3.500 3.500v9.300H.5z" fill="url(#flg)" stroke="#8e9cba" stroke-width=".9"/><path d="M.5 .5h6.300l3.500 3.500" fill="none" stroke="#b3a374" stroke-width=".9"/><path d="M6.800 .5v3.500h3.500z" fill="#f1e6c4" stroke="#b3a374" stroke-width=".7"/><path d="M2.300 3.800h3.500M2.300 5.700h6M2.300 7.600h6M2.300 9.500h6M2.300 11.400h6" stroke="#4069b0" stroke-width=".95"/></svg>
<div class="t" style="left:74px;top:428px">SConscript</div>
<svg style="left:24.8px;top:450.8px" width="7" height="10" viewBox="0 0 7 10"><path d="M1 .8 5.200 5 1 9.200" stroke="#858585" stroke-width="1.500" fill="none"/></svg>
<svg style="left:38px;top:451px" width="16" height="12" viewBox="0 0 16 12"><defs><linearGradient id="fg" x1="0" y1="0" x2="0" y2="1"><stop offset="0" stop-color="#fef4cf"/><stop offset="1" stop-color="#f6cf7e"/></linearGradient></defs><path d="M.6 10V2.200l1.300-1.700h3.800l1.400 1.700h4.800v2.800" fill="url(#fg)" stroke="#c98f3c" stroke-width=".9" stroke-linejoin="round"/><path d="M.9 10.600 3.800 5.300h10.900l-3.100 5.300z" fill="url(#fg)" stroke="#c98f3c" stroke-width=".9" stroke-linejoin="round"/></svg>
<div class="t" style="left:58px;top:446px">ra</div>
<svg style="left:24.8px;top:468.8px" width="7" height="10" viewBox="0 0 7 10"><path d="M1 .8 5.200 5 1 9.200" stroke="#858585" stroke-width="1.500" fill="none"/></svg>
<svg style="left:38px;top:469px" width="16" height="12" viewBox="0 0 16 12"><defs><linearGradient id="fg" x1="0" y1="0" x2="0" y2="1"><stop offset="0" stop-color="#fef4cf"/><stop offset="1" stop-color="#f6cf7e"/></linearGradient></defs><path d="M.6 10V2.200l1.300-1.700h3.800l1.400 1.700h4.800v2.800" fill="url(#fg)" stroke="#c98f3c" stroke-width=".9" stroke-linejoin="round"/><path d="M.9 10.600 3.800 5.300h10.900l-3.100 5.300z" fill="url(#fg)" stroke="#c98f3c" stroke-width=".9" stroke-linejoin="round"/></svg>
<div class="t" style="left:58px;top:464px">ra_cfg</div>
<svg style="left:24.8px;top:486.8px" width="7" height="10" viewBox="0 0 7 10"><path d="M1 .8 5.200 5 1 9.200" stroke="#858585" stroke-width="1.500" fill="none"/></svg>
<svg style="left:38px;top:487px" width="16" height="12" viewBox="0 0 16 12"><defs><linearGradient id="fg" x1="0" y1="0" x2="0" y2="1"><stop offset="0" stop-color="#fef4cf"/><stop offset="1" stop-color="#f6cf7e"/></linearGradient></defs><path d="M.6 10V2.200l1.300-1.700h3.800l1.400 1.700h4.800v2.800" fill="url(#fg)" stroke="#c98f3c" stroke-width=".9" stroke-linejoin="round"/><path d="M.9 10.600 3.800 5.300h10.900l-3.100 5.300z" fill="url(#fg)" stroke="#c98f3c" stroke-width=".9" stroke-linejoin="round"/></svg>
<div class="t" style="left:58px;top:482px">ra_gen</div>
<svg style="left:24.8px;top:504.8px" width="7" height="10" viewBox="0 0 7 10"><path d="M1 .8 5.200 5 1 9.200" stroke="#858585" stroke-width="1.500" fill="none"/></svg>
<svg style="left:38px;top:505px" width="16" height="12" viewBox="0 0 16 12"><defs><linearGradient id="fg" x1="0" y1="0" x2="0" y2="1"><stop offset="0" stop-color="#fef4cf"/><stop offset="1" stop-color="#f6cf7e"/></linearGradient></defs><path d="M.6 10V2.200l1.300-1.700h3.800l1.400 1.700h4.800v2.800" fill="url(#fg)" stroke="#c98f3c" stroke-width=".9" stroke-linejoin="round"/><path d="M.9 10.600 3.800 5.300h10.900l-3.100 5.300z" fill="url(#fg)" stroke="#c98f3c" stroke-width=".9" stroke-linejoin="round"/></svg>
<div class="t" style="left:58px;top:500px">rt-thread <span style="color:#8a6d3b">[5.0.2]</span></div>
<svg style="left:24.8px;top:522.8px" width="7" height="10" viewBox="0 0 7 10"><path d="M1 .8 5.200 5 1 9.200" stroke="#858585" stroke-width="1.500" fill="none"/></svg>
<svg style="left:38px;top:523px" width="16" height="12" viewBox="0 0 16 12"><defs><linearGradient id="fg" x1="0" y1="0" x2="0" y2="1"><stop offset="0" stop-color="#fef4cf"/><stop offset="1" stop-color="#f6cf7e"/></linearGradient></defs><path d="M.6 10V2.200l1.300-1.700h3.800l1.400 1.700h4.800v2.800" fill="url(#fg)" stroke="#c98f3c" stroke-width=".9" stroke-linejoin="round"/><path d="M.9 10.600 3.800 5.300h10.900l-3.100 5.300z" fill="url(#fg)" stroke="#c98f3c" stroke-width=".9" stroke-linejoin="round"/></svg>
<div class="t" style="left:58px;top:518px">script</div>
<svg style="left:24px;top:542.3px" width="10" height="7" viewBox="0 0 10 7"><path d="M.8 1.200 4.700 5 8.600 1.200" stroke="#1a1a1a" stroke-width="1.500" fill="none"/></svg>
<svg style="left:38px;top:541px" width="16" height="12" viewBox="0 0 16 12"><defs><linearGradient id="fg" x1="0" y1="0" x2="0" y2="1"><stop offset="0" stop-color="#fef4cf"/><stop offset="1" stop-color="#f6cf7e"/></linearGradient></defs><path d="M.6 10V2.200l1.300-1.700h3.800l1.400 1.700h4.800v2.800" fill="url(#fg)" stroke="#c98f3c" stroke-width=".9" stroke-linejoin="round"/><path d="M.9 10.600 3.800 5.300h10.900l-3.100 5.300z" fill="url(#fg)" stroke="#c98f3c" stroke-width=".9" stroke-linejoin="round"/></svg>
<div class="t" style="left:58px;top:536px">src</div>
<svg style="left:40.8px;top:558.8px" width="7" height="10" viewBox="0 0 7 10"><path d="M1 .8 5.200 5 1 9.200" stroke="#858585" stroke-width="1.500" fill="none"/></svg>
<svg style="left:56px;top:556px" width="12" height="15" viewBox="0 0 12 15"><defs><linearGradient id="cfg" x1="0" y1="0" x2="1" y2="1"><stop offset="0" stop-color="#fff"/><stop offset="1" stop-color="#dfeaf8"/></linearGradient></defs><path d="M.5 .5h6.800l3.700 3.700v9.800H.5z" fill="url(#cfg)" stroke="#a8955a" stroke-width="1"/><path d="M7.300 .5v3.700h3.700z" fill="#f3e7c0" stroke="#a8955a" stroke-width=".7"/><text x="5.700" y="11.800" font-size="10" font-weight="bold" fill="#28599a" text-anchor="middle" font-family="Liberation Sans,sans-serif" letter-spacing="-.4">.c</text></svg>
<div class="t" style="left:74px;top:554px">hal_entry.c</div>
<svg style="left:24.8px;top:576.8px" width="7" height="10" viewBox="0 0 7 10"><path d="M1 .8 5.200 5 1 9.200" stroke="#858585" stroke-width="1.500" fill="none"/></svg>
<svg style="left:40px;top:574px" width="12" height="15" viewBox="0 0 12 15"><path d="M.5 .5h6.800l3.700 3.700v9.800H.5z" fill="url(#cfg)" stroke="#a8955a" stroke-width="1"/><path d="M7.300 .5v3.700h3.700z" fill="#f3e7c0" stroke="#a8955a" stroke-width=".7"/><text x="5.700" y="11.800" font-size="10" font-weight="bold" fill="#27407a" text-anchor="middle" font-family="Liberation Sans,sans-serif" letter-spacing="-.4">.h</text></svg>
<div class="t" style="left:58px;top:572px;letter-spacing:0.3px">rtconfig.h</div>
<svg style="left:40px;top:592.5px" width="11" height="14" viewBox="0 0 11 14"><defs><linearGradient id="flg" x1="0" y1="0" x2="0" y2="1"><stop offset=".5" stop-color="#fff"/><stop offset="1" stop-color="#dfe8f6"/></linearGradient></defs><path d="M.5 .5h6.300l3.500 3.500v9.300H.5z" fill="url(#flg)" stroke="#8e9cba" stroke-width=".9"/><path d="M.5 .5h6.300l3.500 3.500" fill="none" stroke="#b3a374" stroke-width=".9"/><path d="M6.800 .5v3.500h3.500z" fill="#f1e6c4" stroke="#b3a374" stroke-width=".7"/><path d="M2.300 3.800h3.500M2.300 5.700h6M2.300 7.600h6M2.300 9.500h6M2.300 11.400h6" stroke="#4069b0" stroke-width=".95"/></svg>
<div class="t" style="left:58px;top:590px;letter-spacing:0.16px">buildinfo.gpdsc</div>
<svg style="left:40px;top:610.5px" width="11" height="14" viewBox="0 0 11 14"><defs><linearGradient id="flg" x1="0" y1="0" x2="0" y2="1"><stop offset=".5" stop-color="#fff"/><stop offset="1" stop-color="#dfe8f6"/></linearGradient></defs><path d="M.5 .5h6.300l3.500 3.500v9.300H.5z" fill="url(#flg)" stroke="#8e9cba" stroke-width=".9"/><path d="M.5 .5h6.300l3.500 3.500" fill="none" stroke="#b3a374" stroke-width=".9"/><path d="M6.800 .5v3.500h3.500z" fill="#f1e6c4" stroke="#b3a374" stroke-width=".7"/><path d="M2.300 3.800h3.500M2.300 5.700h6M2.300 7.600h6M2.300 9.500h6M2.300 11.400h6" stroke="#4069b0" stroke-width=".95"/></svg>
<div class="t" style="left:58px;top:608px;letter-spacing:0.18px">configuration.xml</div>
<svg style="left:40px;top:628.5px" width="11" height="14" viewBox="0 0 11 14"><defs><linearGradient id="flg" x1="0" y1="0" x2="0" y2="1"><stop offset=".5" stop-color="#fff"/><stop offset="1" stop-color="#dfe8f6"/></linearGradient></defs><path d="M.5 .5h6.300l3.500 3.500v9.300H.5z" fill="url(#flg)" stroke="#8e9cba" stroke-width=".9"/><path d="M.5 .5h6.300l3.500 3.500" fill="none" stroke="#b3a374" stroke-width=".9"/><path d="M6.800 .5v3.500h3.500z" fill="#f1e6c4" stroke="#b3a374" stroke-width=".7"/><path d="M2.300 3.800h3.500M2.300 5.700h6M2.300 7.600h6M2.300 9.500h6M2.300 11.400h6" stroke="#4069b0" stroke-width=".95"/></svg>
<div class="t" style="left:58px;top:626px">memory_regions.ld</div>
<svg style="left:40px;top:646.5px" width="11" height="14" viewBox="0 0 11 14"><defs><linearGradient id="flg" x1="0" y1="0" x2="0" y2="1"><stop offset=".5" stop-color="#fff"/><stop offset="1" stop-color="#dfe8f6"/></linearGradient></defs><path d="M.5 .5h6.300l3.500 3.500v9.300H.5z" fill="url(#flg)" stroke="#8e9cba" stroke-width=".9"/><path d="M.5 .5h6.300l3.500 3.500" fill="none" stroke="#b3a374" stroke-width=".9"/><path d="M6.800 .5v3.500h3.500z" fill="#f1e6c4" stroke="#b3a374" stroke-width=".7"/><path d="M2.300 3.800h3.500M2.300 5.700h6M2.300 7.600h6M2.300 9.500h6M2.300 11.400h6" stroke="#4069b0" stroke-width=".95"/></svg>
<div class="t" style="left:58px;top:644px">memory_regions.scat</div>
<svg style="left:40px;top:664px" width="12" height="15" viewBox="0 0 12 15"><path d="M.5 .5h6.800l3.700 3.700v9.800H.5z" fill="url(#cfg)" stroke="#a8955a" stroke-width="1"/><path d="M7.300 .5v3.700h3.700z" fill="#f3e7c0" stroke="#a8955a" stroke-width=".7"/><text x="5.700" y="11.600" font-size="10.500" font-weight="bold" fill="#2a4a8c" text-anchor="middle" font-family="Liberation Serif,serif">w</text></svg>
<div class="t" style="left:58px;top:662px;letter-spacing:-0.43px">README.md</div>
<div class="abs" style="left:2px;top:731px;width:226px;height:16px;background:#f0f0f0"></div>
<div class="abs" style="left:19px;top:738px;width:178px;height:2px;background:#7a7a7a"></div>
</div></div>
<div class="panel" style="left:238px;top:82px;width:769px;height:368px">
<div class="hdr"></div>
<div class="abs" style="left:151px;top:0;width:107px;height:26px;background:linear-gradient(#d9e3ee,#fff 92%);border-radius:6px 6px 0 0"></div>
<svg style="left:6px;top:6px" width="15" height="15" viewBox="0 0 15 15"><rect x=".5" y=".5" width="14" height="14" fill="#eef3fa" stroke="#a8b4c8"/><rect x="2.500" y="2.500" width="3.500" height="3.500" fill="#fff" stroke="#8a96a8" stroke-width=".8"/><rect x="2.500" y="8.500" width="3.500" height="3.500" fill="#fff" stroke="#8a96a8" stroke-width=".8"/><path d="M8 4.500h5M8 10.500h5" stroke="#8a96a8" stroke-width="1"/><path d="M3 4 4.200 5.400 7 2.200" stroke="#8a96a8" stroke-width=".8" fill="none"/></svg>
<div class="t g" style="left:25px;top:5px;letter-spacing:-0.28px">RT-Thread Settings</div>
<svg style="left:157.5px;top:6px" width="12" height="15" viewBox="0 0 12 15"><defs><linearGradient id="cfg" x1="0" y1="0" x2="1" y2="1"><stop offset="0" stop-color="#fff"/><stop offset="1" stop-color="#dfeaf8"/></linearGradient></defs><path d="M.5 .5h6.800l3.700 3.700v9.800H.5z" fill="url(#cfg)" stroke="#a8955a" stroke-width="1"/><path d="M7.300 .5v3.700h3.700z" fill="#f3e7c0" stroke="#a8955a" stroke-width=".7"/><text x="5.700" y="11.800" font-size="10" font-weight="bold" fill="#28599a" text-anchor="middle" font-family="Liberation Sans,sans-serif" letter-spacing="-.4">.c</text></svg>
<div class="t" style="left:174.500px;top:5px">hal_entry.c</div>
<svg style="left:238.2px;top:8.2px" width="12" height="12" viewBox="0 0 11 11"><path d="M1 2.600 2.600 1 5.500 3.900 8.400 1 10 2.600 7.100 5.500 10 8.400 8.400 10 5.500 7.100 2.600 10 1 8.400 3.900 5.500z" fill="#fff" stroke="#4a4a4a" stroke-width=".9" stroke-linejoin="round"/></svg>
<svg style="left:721px;top:8px" width="11" height="5" viewBox="0 0 11 5"><rect x=".5" y=".5" width="9" height="3" fill="#fff" stroke="#555" stroke-width="1"/></svg>
<svg style="left:744px;top:8px" width="11" height="11" viewBox="0 0 11 11"><rect x=".5" y=".5" width="9" height="9" fill="#fff" stroke="#555" stroke-width="1"/><path d="M.5 2.500h9" stroke="#555" stroke-width="1"/></svg>
<div class="abs" style="left:3px;top:28px;width:12px;height:337px;background:#f7f7f7"></div>
<div class="abs" style="left:48px;top:28px;width:1px;height:320px;background:#efefef"></div>
<div class="abs" style="left:51px;top:98px;width:685px;height:18px;background:#e8f2fe"></div>
<svg style="left:3px;top:242px" width="12" height="18"><defs><pattern id="chk" width="2" height="2" patternUnits="userSpaceOnUse"><rect width="2" height="2" fill="#7ab0dc"/><rect width="1" height="1" fill="#3f8fd0"/><rect x="1" y="1" width="1" height="1" fill="#3f8fd0"/></pattern></defs><rect width="12" height="18" fill="url(#chk)"/></svg>
<div class="t ln" style="top:26px">16</div><div class="t mono cl" style="top:27px"><span class="kw">#include</span> <span class="str">&lt;wlan_prot.h&gt;</span></div>
<div class="t ln" style="top:44px">17</div><div class="t mono cl" style="top:45px"><span class="kw">#include</span> <span class="str">&lt;wlan_cfg.h&gt;</span></div>
<div class="t ln" style="top:62px">18</div><div class="t mono cl" style="top:63px"></div>
<div class="t ln" style="top:80px">19</div><div class="t mono cl" style="top:81px"><span class="kw">#include</span> <span class="str">&lt;paho_mqtt.h&gt;</span></div>
<div class="t ln" style="top:98px">20</div><div class="t mono cl" style="top:99px"><span class="kw">#include</span> <span class="str">&lt;cJSON.h&gt;</span></div>
<div class="t ln" style="top:116px">21</div><div class="t mono cl" style="top:117px"></div>
<div class="t ln" style="top:134px">22</div><div class="t mono cl" style="top:135px"><span class="kw">#define</span> LED_PIN    BSP_IO_PORT_01_PIN_02 <span class="cm">/* <span class="sq">Onboard<svg><rect width="100%" height="3" fill="url(#zz)"/></svg></span> LED pins */</span></div>
<div class="t ln" style="top:152px">23</div><div class="t mono cl" style="top:153px"></div>
<div class="t ln" style="top:170px">24</div><div class="t mono cl" style="top:171px"><span class="kw">#define</span> WIFI_SSID       <span class="str">"<span class="sq">itbakery<svg><rect width="100%" height="3" fill="url(#zz)"/></svg></span>"</span></div>
<div class="t ln" style="top:188px">25</div><div class="t mono cl" style="top:189px"><span class="kw">#define</span> WIFI_PASSWD     <span class="str">"<span class="sq">itbakery<svg><rect width="100%" height="3" fill="url(#zz)"/></svg></span>@9"</span></div>
<div class="t ln" style="top:206px">26</div><div class="t mono cl" style="top:207px"></div>
<div class="t ln" style="top:224px">27</div><div class="t mono cl" style="top:225px"><span class="kw">#define</span> MQTT_BROKER     <span class="str">"<span class="sq">tcp<svg><rect width="100%" height="3" fill="url(#zz)"/></svg></span>://broker.emqx.io:1883"</span></div>
<div class="t ln" style="top:242px">28</div><div class="t mono cl" style="top:243px"><span class="kw">#define</span> MQTT_CLIENT_ID  <span class="str">"<span class="sq">muict<svg><rect width="100%" height="3" fill="url(#zz)"/></svg></span>-001"</span></div>
<div class="t ln" style="top:260px">29</div><div class="t mono cl" style="top:261px"><span class="kw">#define</span> MQTT_PUB_TOPIC  <span class="str">"<span class="sq">rt<svg><rect width="100%" height="3" fill="url(#zz)"/></svg></span>-thread-node1/pub/test"</span></div>
<div class="t ln" style="top:278px">30</div><div class="t mono cl" style="top:279px"><span class="kw">#define</span> MQTT_SUB_TOPIC  <span class="str">"<span class="sq">rt<svg><rect width="100%" height="3" fill="url(#zz)"/></svg></span>-thread-node1/#"</span></div>
<div class="t ln" style="top:296px">31</div><div class="t mono cl" style="top:297px"></div>
<div class="t ln" style="top:314px">32</div><div class="t mono cl" style="top:315px"></div>
<div class="t ln" style="top:332px">33</div><div class="t mono cl" style="top:333px"><span class="kw">static</span> <span class="ty">MQTTClient</span>   mqttClient;</div>
<div class="abs" style="left:737px;top:28px;width:16px;height:321px;background:#f0f0f0"></div>
<div class="abs" style="left:753px;top:26px;width:13px;height:339px;background:#f8f8f8"></div>
<div class="abs" style="left:744px;top:83px;width:2px;height:43px;background:#7a7a7a"></div>
<div class="abs" style="left:3px;top:348px;width:46px;height:17px;background:#f8f8f8"></div>
<div class="abs" style="left:49px;top:349px;width:704px;height:16px;background:#f0f0f0"></div>
<div class="abs" style="left:66px;top:356px;width:536px;height:2px;background:#7a7a7a"></div>
</div>
<div class="panel" style="left:1011px;top:82px;width:218px;height:368px">
<div class="hdr"></div>
<div class="abs" style="left:0;top:0;width:90px;height:26px;background:linear-gradient(#d6e1ed,#fff 92%);border-radius:6px 6px 0 0"></div>
<svg style="left:6px;top:6px" width="14" height="15" viewBox="0 0 14 15"><rect x=".6" y=".6" width="4.800" height="5.300" fill="#fff" stroke="#2f6fb8" stroke-width="1.100"/><rect x=".6" y="9" width="4.800" height="5.300" fill="#fff" stroke="#2f6fb8" stroke-width="1.100"/><path d="M7.500 2.500h6M7.500 12.500h6M11 7.500h2.500" stroke="#2f6fb8" stroke-width="1.100"/><rect x="7.500" y="6.300" width="2.400" height="2.400" fill="#fff" stroke="#2f6fb8" stroke-width=".9"/></svg>
<div class="t" style="left:24.500px;top:5px;letter-spacing:0.05px">Outline</div>
<svg style="left:71.5px;top:8.2px" width="12" height="12" viewBox="0 0 11 11"><path d="M1 2.600 2.600 1 5.500 3.900 8.400 1 10 2.600 7.100 5.500 10 8.400 8.400 10 5.500 7.100 2.600 10 1 8.400 3.900 5.500z" fill="#fff" stroke="#4a4a4a" stroke-width=".9" stroke-linejoin="round"/></svg>
<svg style="left:96px;top:6px" width="14" height="14" viewBox="0 0 14 14"><circle cx="7" cy="7" r="6.300" fill="#fff" stroke="#b5d3b8" stroke-width="1"/><circle cx="7" cy="7" r="3.800" fill="#e8f3e8" stroke="#9cc4a0" stroke-width="1"/><circle cx="7" cy="7" r="1.700" fill="#8fbf94"/></svg>
<div class="t g" style="left:114px;top:5px">Build...</div>
<svg style="left:170px;top:8px" width="11" height="5" viewBox="0 0 11 5"><rect x=".5" y=".5" width="9" height="3" fill="#fff" stroke="#555" stroke-width="1"/></svg>
<svg style="left:193px;top:8px" width="11" height="11" viewBox="0 0 11 11"><rect x=".5" y=".5" width="9" height="9" fill="#fff" stroke="#555" stroke-width="1"/><path d="M.5 2.500h9" stroke="#555" stroke-width="1"/></svg>
<svg style="left:51px;top:32px" width="14" height="14" viewBox="0 0 14 14"><rect x=".5" y=".5" width="10" height="10" rx="1" fill="#f4f8fd" stroke="#a9c0de"/><rect x="2.500" y="2.500" width="10.500" height="10.500" rx="1" fill="#fbfdff" stroke="#8fabd2"/><path d="M4.800 8h6" stroke="#24478f" stroke-width="1.500"/></svg>
<svg style="left:71px;top:30px" width="18" height="18" viewBox="0 0 18 18"><path d="M3 2.500v11M.8 11 3 13.800 5.200 11" stroke="#555" stroke-width="1" fill="none"/><text x="6" y="8.500" font-size="11.500" font-weight="bold" fill="#17806a" font-family="Liberation Serif,serif">a</text><text x="9.500" y="17" font-size="11.500" font-weight="bold" fill="#8a1a8a" font-family="Liberation Serif,serif">z</text></svg>
<svg style="left:95px;top:31px" width="16" height="16" viewBox="0 0 16 16"><circle cx="8" cy="8" r="5.200" fill="#6fb0ea" stroke="#2f6fb8" stroke-width="1"/><rect x="5" y="6" width="6" height="4.500" rx="1" fill="#d8ecfb"/><path d="M.8 .8 15 14.500" stroke="#1f2f7a" stroke-width="1.300"/></svg>
<svg style="left:117px;top:31px" width="18" height="16" viewBox="0 0 18 16"><circle cx="6" cy="10" r="3.400" fill="#b0b0b0" stroke="#8a8a8a" stroke-width=".8"/><path d="M.5 4.500 12 15" stroke="#1f2f7a" stroke-width="1.200"/><text x="10.500" y="7.500" font-size="9.500" fill="#c8102a" font-family="Liberation Sans,sans-serif">S</text></svg>
<svg style="left:145px;top:36px" width="8" height="8" viewBox="0 0 8 8"><circle cx="4" cy="4" r="3.400" fill="#6cbb62" stroke="#4a9a48" stroke-width=".8"/><circle cx="3.300" cy="3.200" r="1.400" fill="#8fd088"/></svg>
<svg style="left:164px;top:32px" width="15" height="15" viewBox="0 0 15 15"><path d="M4.800 2v11M9.200 2v11M1.500 5.300h11M1.500 9.700h11" stroke="#111" stroke-width="2"/><path d="M1 .5 14 14.500" stroke="#333" stroke-width=".9"/></svg>
<svg style="left:195px;top:34px" width="11" height="7" viewBox="0 0 11 7"><path d="M.7 .6h9.600L5.500 5.400z" fill="#fff" stroke="#555" stroke-width=".9" stroke-linejoin="round"/></svg>
<div class="abs" style="left:0;top:50px;width:199px;height:299px;overflow:hidden">
<svg style="left:31px;top:4px" width="12" height="11" viewBox="0 0 12 11"><rect x="0" y="0" width="4.800" height="4.800" fill="#2d72ae"/><path d="M7.300 0h3.700v10H1v-3.700h6.300z" fill="#3a82bb"/></svg>
<div class="t" style="left:55px;top:0px">C:\Renesas\workspace\visi</div>
<svg style="left:31px;top:22px" width="12" height="11" viewBox="0 0 12 11"><rect x="0" y="0" width="4.800" height="4.800" fill="#2d72ae"/><path d="M7.300 0h3.700v10H1v-3.700h6.300z" fill="#3a82bb"/></svg>
<div class="t" style="left:55px;top:18px">rtthread.h</div>
<svg style="left:31px;top:40px" width="12" height="11" viewBox="0 0 12 11"><rect x="0" y="0" width="4.800" height="4.800" fill="#2d72ae"/><path d="M7.300 0h3.700v10H1v-3.700h6.300z" fill="#3a82bb"/></svg>
<div class="t" style="left:55px;top:36px">rtdevice.h</div>
<svg style="left:31px;top:58px" width="12" height="11" viewBox="0 0 12 11"><rect x="0" y="0" width="4.800" height="4.800" fill="#2d72ae"/><path d="M7.300 0h3.700v10H1v-3.700h6.300z" fill="#3a82bb"/></svg>
<div class="t" style="left:55px;top:54px">hal_data.h</div>
<svg style="left:31px;top:76px" width="12" height="11" viewBox="0 0 12 11"><rect x="0" y="0" width="4.800" height="4.800" fill="#2d72ae"/><path d="M7.300 0h3.700v10H1v-3.700h6.300z" fill="#3a82bb"/></svg>
<div class="t" style="left:55px;top:72px">wlan_mgnt.h</div>
<svg style="left:31px;top:94px" width="12" height="11" viewBox="0 0 12 11"><rect x="0" y="0" width="4.800" height="4.800" fill="#2d72ae"/><path d="M7.300 0h3.700v10H1v-3.700h6.300z" fill="#3a82bb"/></svg>
<div class="t" style="left:55px;top:90px">wlan_prot.h</div>
<svg style="left:31px;top:112px" width="12" height="11" viewBox="0 0 12 11"><rect x="0" y="0" width="4.800" height="4.800" fill="#2d72ae"/><path d="M7.300 0h3.700v10H1v-3.700h6.300z" fill="#3a82bb"/></svg>
<div class="t" style="left:55px;top:108px">wlan_cfg.h</div>
<svg style="left:31px;top:130px" width="12" height="11" viewBox="0 0 12 11"><rect x="0" y="0" width="4.800" height="4.800" fill="#2d72ae"/><path d="M7.300 0h3.700v10H1v-3.700h6.300z" fill="#3a82bb"/></svg>
<div class="t" style="left:55px;top:126px">paho_mqtt.h</div>
<svg style="left:31px;top:148px" width="12" height="11" viewBox="0 0 12 11"><rect x="0" y="0" width="4.800" height="4.800" fill="#2d72ae"/><path d="M7.300 0h3.700v10H1v-3.700h6.300z" fill="#3a82bb"/></svg>
<div class="t" style="left:55px;top:144px">cJSON.h</div>
<svg style="left:31px;top:166px" width="11" height="11" viewBox="0 0 11 11"><path d="M4.200 .3 2.600 10.300M8.400 .3 6.800 10.300M1.200 3.600h9.300M.5 7h9.300" stroke="#2d619c" stroke-width="1.800" fill="none"/></svg>
<div class="t" style="left:55px;top:162px;letter-spacing:-0.65px">LED_PIN</div>
<svg style="left:31px;top:184px" width="11" height="11" viewBox="0 0 11 11"><path d="M4.200 .3 2.600 10.300M8.400 .3 6.800 10.300M1.200 3.600h9.300M.5 7h9.300" stroke="#2d619c" stroke-width="1.800" fill="none"/></svg>
<div class="t" style="left:55px;top:180px;letter-spacing:-0.65px">WIFI_SSID</div>
<svg style="left:31px;top:202px" width="11" height="11" viewBox="0 0 11 11"><path d="M4.200 .3 2.600 10.300M8.400 .3 6.800 10.300M1.200 3.600h9.300M.5 7h9.300" stroke="#2d619c" stroke-width="1.800" fill="none"/></svg>
<div class="t" style="left:55px;top:198px;letter-spacing:-0.65px">WIFI_PASSWD</div>
<svg style="left:31px;top:220px" width="11" height="11" viewBox="0 0 11 11"><path d="M4.200 .3 2.600 10.300M8.400 .3 6.800 10.300M1.200 3.600h9.300M.5 7h9.300" stroke="#2d619c" stroke-width="1.800" fill="none"/></svg>
<div class="t" style="left:55px;top:216px;letter-spacing:-0.65px">MQTT_BROKER</div>
<div class="abs" style="left:26px;top:234px;width:124px;height:18px;background:#d9d9d9;border-radius:2px"></div>
<svg style="left:31px;top:238px" width="11" height="11" viewBox="0 0 11 11"><path d="M4.200 .3 2.600 10.300M8.400 .3 6.800 10.300M1.200 3.600h9.300M.5 7h9.300" stroke="#2d619c" stroke-width="1.800" fill="none"/></svg>
<div class="t" style="left:55px;top:234px;letter-spacing:-0.65px">MQTT_CLIENT_ID</div>
<svg style="left:31px;top:256px" width="11" height="11" viewBox="0 0 11 11"><path d="M4.200 .3 2.600 10.300M8.400 .3 6.800 10.300M1.200 3.600h9.300M.5 7h9.300" stroke="#2d619c" stroke-width="1.800" fill="none"/></svg>
<div class="t" style="left:55px;top:252px;letter-spacing:-0.65px">MQTT_PUB_TOPIC</div>
<svg style="left:31px;top:274px" width="11" height="11" viewBox="0 0 11 11"><path d="M4.200 .3 2.600 10.300M8.400 .3 6.800 10.300M1.200 3.600h9.300M.5 7h9.300" stroke="#2d619c" stroke-width="1.800" fill="none"/></svg>
<div class="t" style="left:55px;top:270px;letter-spacing:-0.65px">MQTT_SUB_TOPIC</div>
<svg style="left:31px;top:290px" width="22" height="14" viewBox="0 0 22 14"><circle cx="5.500" cy="9.500" r="4.600" fill="#3b78b8"/><path d="M2 7.500a4 4 0 0 1 7 0" stroke="#7fb0e0" stroke-width="1" fill="none"/><text x="12.500" y="8" font-size="10" fill="#c0103a" font-family="Liberation Sans,sans-serif">S</text></svg>
<div class="t" style="left:55px;top:288px">mqttClient <span style="color:#8a6d3b">: MQTTClient</span></div>
</div>
<div class="abs" style="left:199px;top:50px;width:16px;height:299px;background:#f0f0f0"></div>
<div class="abs" style="left:206px;top:67px;width:2px;height:176px;background:#7a7a7a"></div>
<div class="abs" style="left:3px;top:349px;width:212px;height:16px;background:#f0f0f0"></div>
<div class="abs" style="left:20px;top:356px;width:86px;height:2px;background:#7a7a7a"></div>
</div>
<div class="panel" style="left:238px;top:454px;width:991px;height:377px;border-radius:7px 7px 6px 6px">
<div class="abs" style="left:0;top:0;right:0;height:26px;background:#d3e0f0;border-top:1px solid #b9bcc4;border-bottom:1px solid #b4c6dd"></div>
<div class="abs" style="left:139px;top:1px;width:95px;height:25px;background:#fff;border-radius:6px 6px 0 0;border:1px solid #c6d0de;border-bottom:none"></div>
<svg style="left:5px;top:6.5px" width="14.5" height="14.5" viewBox="0 0 16 16"><path d="M.5 .5h12.500l1.500 3-1.500 4 2.500 7.500H.5z" fill="#eef4fb" stroke="#6f7f98" stroke-width=".9"/><path d="M.5 7.500h13M8.500 .5v14" stroke="#9fb0c8" stroke-width=".8"/><circle cx="4.800" cy="4" r="2.700" fill="#e0303a"/><path d="M2.200 14.500v-2.500l2.600-3 2.600 3v2.500z" fill="#f5a81c"/></svg>
<div class="t" style="left:24.700px;top:5px">Problems</div>
<svg style="left:85px;top:5px" width="16" height="16" viewBox="0 0 16 16"><rect x="3" y="2.500" width="11.500" height="12.500" rx="1" fill="#f3e6c8" stroke="#b89a5a" stroke-width=".9"/><rect x="6" y="1" width="5.500" height="3" fill="#d8c8a0" stroke="#9a8250" stroke-width=".7"/><path d="M6.500 7.500h6M6.500 10h6M6.500 12.500h6" stroke="#8a96b8" stroke-width=".9"/><path d="M.8 9 3.800 12.500 9 4.500" stroke="#2a6fd8" stroke-width="1.800" fill="none"/></svg>
<div class="t" style="left:104.500px;top:5px;letter-spacing:-0.3px">Tasks</div>
<svg style="left:145.3px;top:7px" width="13.5" height="13.5" viewBox="0 0 16 16"><rect x="1.200" y="1.200" width="13.600" height="10" rx="1.500" fill="#fff" stroke="#2f5fb8" stroke-width="1.800"/><path d="M4 5h7M4 7.500h5" stroke="#4a4a6a" stroke-width="1.100"/><path d="M5.500 11.500h5l.8 2.500h-6.600z" fill="#2f5fb8"/><path d="M2.500 14.800h11" stroke="#2f5fb8" stroke-width="1.300"/></svg>
<div class="t" style="left:162px;top:5px">Console</div>
<svg style="left:213.5px;top:8.2px" width="12" height="12" viewBox="0 0 11 11"><path d="M1 2.600 2.600 1 5.500 3.900 8.400 1 10 2.600 7.100 5.500 10 8.400 8.400 10 5.500 7.100 2.600 10 1 8.400 3.900 5.500z" fill="#fff" stroke="#4a4a4a" stroke-width=".9" stroke-linejoin="round"/></svg>
<svg style="left:237px;top:6px" width="15" height="14" viewBox="0 0 15 14"><rect x=".5" y=".5" width="13.500" height="12" fill="#fff" stroke="#8f97ac" stroke-width="1"/><rect x="1" y="1" width="12.500" height="2.400" fill="#aab2c8"/><path d="M4.800 3.500v9M1 6.300h12.500M1 9.200h12.500" stroke="#d4d6de" stroke-width=".8"/></svg>
<div class="t" style="left:255px;top:5px">Properties</div>
<svg style="left:320px;top:5px" width="16" height="16" viewBox="0 0 16 16"><rect x="5.500" y="1" width="9.500" height="8" fill="#d0d0d0" stroke="#4a4a4a" stroke-width=".9"/><rect x="7" y="2.500" width="6.500" height="5" fill="#1638d8"/><rect x="9.500" y="3" width="3" height="2.500" fill="#3f8ff0"/><path d="M9 9.200h3v1.600H8z" fill="#8a8a8a"/><path d="M1.200 12 5 8.500l2.300 2.500-3.800 3.400c-1 .8-3-1.200-2.300-2.400z" fill="#e4e4e4" stroke="#4a4a4a" stroke-width=".8"/><path d="M5 8.500 7.300 11l1-.9-2.300-2.500z" fill="#e8c840" stroke="#8a7a20" stroke-width=".5"/></svg>
<div class="t" style="left:338px;top:5px">Terminal</div>
<svg style="left:765px;top:5.5px" width="17" height="16" viewBox="0 0 17 16"><path d="M.5 .5h7.500l3 3v10H.5z" fill="#fdfbf3" stroke="#c8b88a" stroke-width=".9"/><path d="M2.500 4.500h5M2.500 6.500h6M2.500 8.500h6M2.500 10.500h4" stroke="#5f7fc0" stroke-width=".9"/><path d="M9 9.500 15 15.500M15 9.500 9 15.500" stroke="#8a8a8a" stroke-width="2"/></svg>
<svg style="left:788px;top:6px" width="16" height="16" viewBox="0 0 17 17"><rect x="2.500" y=".5" width="13" height="13" fill="#fff" stroke="#7f9fd0" stroke-width=".9"/><rect x="10.500" y=".5" width="5" height="13" fill="#dfe8f8" stroke="#5f7fc0" stroke-width=".9"/><rect x="12" y="2.500" width="2" height="2.500" fill="#fff" stroke="#3f5fa8" stroke-width=".6"/><rect x="12" y="8.500" width="2" height="2.500" fill="#fff" stroke="#3f5fa8" stroke-width=".6"/><path d="M2.800 9.500v-2.500a2.700 2.700 0 0 1 5.400 0v2.500" fill="none" stroke="#a88a3a" stroke-width="1.300"/><rect x=".8" y="9" width="9.400" height="6.800" rx="1" fill="#e8b83a" stroke="#a87a1a" stroke-width=".8"/><path d="M3 12.500h5" stroke="#8a5a00" stroke-width="1"/></svg>
<svg style="left:812px;top:6px" width="18" height="16" viewBox="0 0 18 16"><path d="M.5 .5h7.500l3 3v10H.5z" fill="#fdfbf3" stroke="#c8b88a" stroke-width=".9"/><path d="M2.500 4.500h5M2.500 6.500h6M2.500 8.500h4M2.500 10.500h3" stroke="#5f7fc0" stroke-width=".9"/><path d="M13 2.500h3.500v8.500h-4.500v2.500L7.500 9.800 12 6v2.500h2V4.500h-1z" fill="#fbe9a8" stroke="#c89a2a" stroke-width=".9" stroke-linejoin="round"/></svg>
<div class="abs" style="left:832px;top:4px;width:1px;height:19px;background:#8d8d8d"></div>
<svg style="left:843px;top:6.5px" width="15" height="15" viewBox="0 0 17 17"><rect x=".5" y="5.500" width="12" height="10" fill="#fff" stroke="#5f7fa8" stroke-width=".9"/><rect x=".5" y="5.500" width="12" height="2.500" fill="#3f7fd0"/><path d="M8 11 11.500 6" stroke="#6a6a6a" stroke-width=".9"/><path d="M9.500 3 12 1 15.500 2.500 14.500 6 11.500 7z" fill="#3fa848" stroke="#2a7a30" stroke-width=".7"/><circle cx="11.800" cy="3" r="1.300" fill="#8fdf90"/></svg>
<svg style="left:867px;top:5.5px" width="14" height="14" viewBox="0 0 16 16"><rect x="1.200" y="1.200" width="13.600" height="10" rx="1.500" fill="#fff" stroke="#2f5fb8" stroke-width="1.800"/><path d="M4 5h7M4 7.500h5" stroke="#4a4a6a" stroke-width="1.100"/><path d="M5.500 11.500h5l.8 2.500h-6.600z" fill="#2f5fb8"/><path d="M2.500 14.800h11" stroke="#2f5fb8" stroke-width="1.300"/></svg>
<svg style="left:888px;top:12px" width="8" height="5" viewBox="0 0 8 5"><path d="M0 0h7.4L3.7 4.2z" fill="#111"/></svg>
<svg style="left:904px;top:6px" width="16" height="16" viewBox="0 0 17 17"><rect x=".5" y="2.500" width="13" height="12" fill="#fdf8e6" stroke="#b89a4a" stroke-width=".9"/><rect x=".5" y="2.500" width="13" height="2.500" fill="#3f7fd0"/><path d="M12.500 0v7M9 3.500h7M10 1 15 6M15 1 10 6" stroke="#f0c030" stroke-width="1.200"/><path d="M12.500 1.800v3.400M10.800 3.500h3.400" stroke="#fff" stroke-width=".9"/></svg>
<svg style="left:926px;top:12px" width="8" height="5" viewBox="0 0 8 5"><path d="M0 0h7.4L3.7 4.2z" fill="#111"/></svg>
<svg style="left:943px;top:8px" width="11" height="5" viewBox="0 0 11 5"><rect x=".5" y=".5" width="9" height="3" fill="#fff" stroke="#555" stroke-width="1"/></svg>
<svg style="left:966px;top:8px" width="11" height="11" viewBox="0 0 11 11"><rect x=".5" y=".5" width="9" height="9" fill="#fff" stroke="#555" stroke-width="1"/><path d="M.5 2.500h9" stroke="#555" stroke-width="1"/></svg>
<div class="t" style="left:3px;top:27px">Log Console</div>
<div class="abs" style="left:0;top:43px;width:988px;height:1px;background:#a0a0a0"></div>
<div class="abs" style="left:0;top:44px;width:972px;height:314px;overflow:hidden">
<div class="t mono" style="left:5px;top:2px">==============================&gt;  netutils update done</div>
<div class="t mono" style="left:5px;top:20px">==============================&gt;  cJSON update done</div>
<div class="t mono" style="left:5px;top:38px">Operation completed successfully.</div>
<div class="t mono" style="left:5px;top:56px">Newlib version: 3.3.0</div>
<div class="t mono" style="left:5px;top:74px">done!</div>
<div class="t mono" style="left:5px;top:92px"></div>
<div class="t mono" style="left:5px;top:110px">start download flash :2025-08-27 17:12:10</div>
<div class="t mono" style="left:5px;top:128px">C:\Renesas\RT-ThreadStudio&gt;cd /d C:\Renesas\RT-ThreadStudio\repo\Extract\Debugger_Support_Packages\RealThread\PyOCD\0.2.7</div>
<div class="t mono" style="left:5px;top:146px">C:\Renesas\RT-ThreadStudio\repo\Extract\Debugger_Support_Packages\RealThread\PyOCD\0.2.7&gt;pyocd.exe flash --target=R7FA8D1</div>
<div class="t mono" style="left:5px;top:164px">0001671 W Overlapping memory regions in file packs\Keil.STM32L4xx_DFP.2.3.0-small.pack (STM32L412C8Tx); deleting outer re</div>
<div class="t mono" style="left:5px;top:182px">0003485 I Loading C:\Renesas\workspace\vision_board_wifi\Debug\rtthread.hex [load_cmd]</div>
<div class="t mono" style="left:5px;top:200px">0003638 W Failed to add data chunk: no memory region defined for address 0x27030080 [file_programmer]</div>
<div class="t mono" style="left:5px;top:218px">[---|---|---|---|---|---|---|---|---|----]</div>
<div class="t mono" style="left:5px;top:236px">[========================================]</div>
<div class="t mono" style="left:5px;top:254px">0050012 I Erased chip, programmed 282752 bytes (2209 pages), skipped 256 bytes (16 pages) at 5.96 kB/s [loader]</div>
<div class="t mono" style="left:5px;top:272px">completed, elapse time :52032ms.</div>
</div>
<div class="abs" style="left:972px;top:44px;width:16px;height:314px;background:#f0f0f0"></div>
<div class="abs" style="left:979px;top:225px;width:2px;height:116px;background:#7a7a7a"></div>
<div class="abs" style="left:3px;top:358px;width:985px;height:17px;background:#f0f0f0"></div>
<div class="abs" style="left:20px;top:366px;width:524px;height:2px;background:#7a7a7a"></div>
<div class="abs" style="left:0;top:0;right:0;bottom:0;border:1px solid #b7b8be;border-radius:7px 7px 6px 6px"></div>
</div>
<div class="abs" style="left:239px;top:750px;width:269px;height:46px;border:2px solid #e8202a"></div>
<div class="abs" style="left:373px;top:52px;width:33px;height:31px;border:2px solid #e8202a"></div>
<div class="abs" style="left:0;top:832px;width:1230px;height:25px;background:#e0e5f5"></div>
<svg style="left:768px;top:836px" width="3" height="17" viewBox="0 0 3 17"><rect x="0" y="0.5" width="2" height="2" fill="#a39880"/><rect x="1" y="1.5" width="1.2" height="1.2" fill="#fff" opacity=".6"/><rect x="0" y="5.2" width="2" height="2" fill="#a39880"/><rect x="1" y="6.2" width="1.2" height="1.2" fill="#fff" opacity=".6"/><rect x="0" y="9.9" width="2" height="2" fill="#a39880"/><rect x="1" y="10.9" width="1.2" height="1.2" fill="#fff" opacity=".6"/><rect x="0" y="14.6" width="2" height="2" fill="#a39880"/><rect x="1" y="15.6" width="1.2" height="1.2" fill="#fff" opacity=".6"/></svg>
<svg style="left:1028px;top:836px" width="18" height="16" viewBox="0 0 18 16"><rect x=".5" y=".5" width="9" height="6" fill="#9fd6a0" stroke="#7a9a88" stroke-width=".8"/><rect x="3" y="3" width="9" height="6" fill="#9fd6a0" stroke="#7a9a88" stroke-width=".8"/><rect x="5.500" y="5.500" width="9" height="6" fill="#a8dca8" stroke="#6a8a78" stroke-width=".8"/><circle cx="12.500" cy="11.500" r="3.800" fill="#e8303a"/><path d="M11 10 14 13M14 10 11 13" stroke="#fff" stroke-width="1.100"/></svg>
<svg style="left:1054px;top:836px" width="3" height="17" viewBox="0 0 3 17"><rect x="0" y="0.5" width="2" height="2" fill="#a39880"/><rect x="1" y="1.5" width="1.2" height="1.2" fill="#fff" opacity=".6"/><rect x="0" y="5.2" width="2" height="2" fill="#a39880"/><rect x="1" y="6.2" width="1.2" height="1.2" fill="#fff" opacity=".6"/><rect x="0" y="9.9" width="2" height="2" fill="#a39880"/><rect x="1" y="10.9" width="1.2" height="1.2" fill="#fff" opacity=".6"/><rect x="0" y="14.6" width="2" height="2" fill="#a39880"/><rect x="1" y="15.6" width="1.2" height="1.2" fill="#fff" opacity=".6"/></svg>
<div class="t" style="left:1066px;top:836px;letter-spacing:-0.35px">Cp1252</div>
<div class="abs" style="left:1178px;top:834px;width:1px;height:22px;background:#a8abb8"></div>
<div class="t" style="left:1188px;top:836px;letter-spacing:-0.95px">CRLF</div>
<div class="abs" style="left:0;top:8px;width:1px;height:841px;background:#b4b4b8"></div>
</body></html>
